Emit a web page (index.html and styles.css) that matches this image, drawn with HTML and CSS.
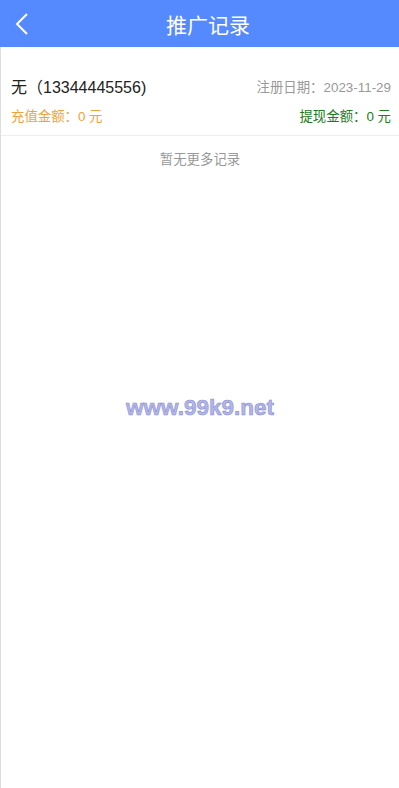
FILE: index.html
```html
<!DOCTYPE html>
<html lang="zh">
<head>
<meta charset="utf-8">
<title>推广记录</title>
<link rel="stylesheet" href="styles.css">
</head>
<body>
<div class="page">
  <header class="topbar">
    <span class="back">
      <svg width="14" height="24" viewBox="0 0 14 24"><path d="M12 2 L2 12 L12 22" fill="none" stroke="#fff" stroke-width="2"/></svg>
    </span>
    <h1 class="title">推广记录</h1>
  </header>
  <main class="content">
    <div class="record">
      <div class="row">
        <span class="name">无（13344445556)</span>
        <span class="date">注册日期：2023-11-29</span>
      </div>
      <div class="row row2">
        <span class="recharge">充值金额：0 元</span>
        <span class="withdraw">提现金额：0 元</span>
      </div>
    </div>
    <p class="empty">暂无更多记录</p>
    <div class="watermark">www.99k9.net</div>
  </main>
</div>
</body>
</html>
```
FILE: styles.css
```css
html, body {
  margin: 0;
  padding: 0;
  background: #fff;
  font-family: "Liberation Sans", Arial, "Noto Sans CJK SC", sans-serif;
}
.page {
  width: 399px;
  height: 788px;
  display: flex;
  flex-direction: column;
}
.topbar {
  height: 47px;
  background: #5589fe;
  display: flex;
  align-items: center;
  position: relative;
}
.back {
  display: flex;
  width: 14px;
  height: 24px;
  margin-left: 15px;
}
.title {
  margin: 0 0 0 137px;
  font-size: 21px;
  font-weight: normal;
  color: #fff;
  font-family: "Noto Sans CJK SC", sans-serif;
}
.content {
  flex: 1;
  border-left: 1px solid #ddd;
  display: flex;
  flex-direction: column;
}
.record {
  padding: 27px 8px 0 10px;
  height: 61px;
  border-bottom: 1px solid #eee;
}
.row {
  display: flex;
  justify-content: space-between;
  align-items: center;
  height: 24px;
}
.row2 {
  margin-top: 5px;
}
.name {
  font-size: 16px;
  color: #222;
}
.date {
  font-size: 13.4px;
  color: #999;
}
.recharge {
  font-size: 13.4px;
  color: #f0a23c;
}
.withdraw {
  font-size: 13.4px;
  color: #1d7a1d;
}
.empty {
  margin: 12px 0 0;
  text-align: center;
  font-size: 13.4px;
  color: #999;
}
.watermark {
  margin-top: 227px;
  text-align: center;
  font-size: 22.5px;
  font-weight: bold;
  color: #b3b6e8;
  -webkit-text-stroke: 0.6px #8a8ed0;
}
```
